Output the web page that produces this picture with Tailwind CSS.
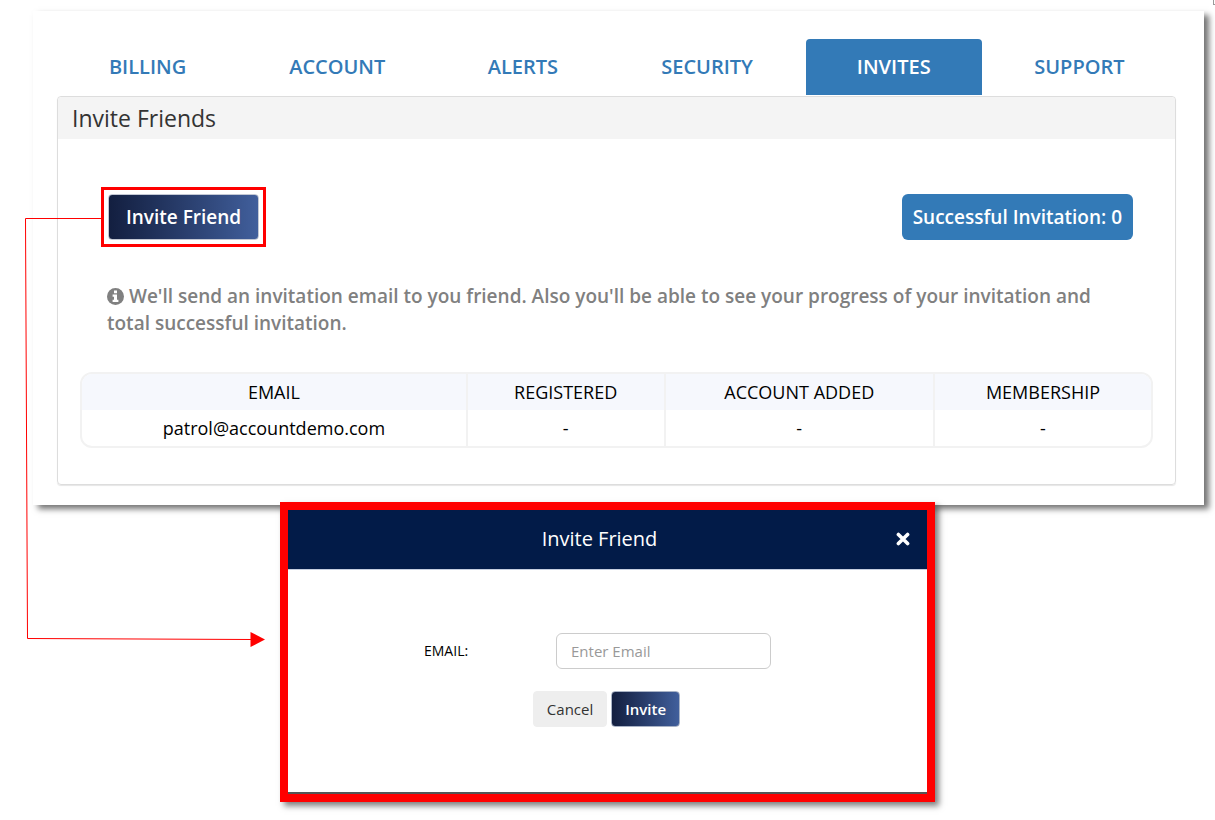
<!DOCTYPE html>
<html lang="en">
<head>

  <title>Invite Friends</title>
  <meta charset="UTF-8" />
  <meta name="viewport" content="width=device-width,initial-scale=1" />
  <script src="https://cdn.jsdelivr.net/npm/@tailwindcss/browser@4"></script>

</head>

<body class="relative bg-white pb-4 font-['Open_Sans','Noto_Sans',sans-serif] text-black">

  <!-- account settings card -->
  <main class="pt-[11px] pl-[33px] pr-[11px]">
    <div class="bg-white pt-7 pl-6 pr-7 pb-5 shadow-[5px_4px_6px_rgba(0,0,0,0.55)]">

      <nav class="-ml-1 mr-1 grid grid-cols-[189fr_190fr_181fr_187fr_186fr_185fr] text-center text-[20px] leading-7 font-semibold text-[#337ab7]">
        <a href="#billing" class="mx-[5px] py-[14px]">BILLING</a>
        <a href="#account" class="mx-[5px] py-[14px]">ACCOUNT</a>
        <a href="#alerts" class="mx-[5px] py-[14px]">ALERTS</a>
        <a href="#security" class="mx-[5px] py-[14px]">SECURITY</a>
        <a href="#invites" class="mx-[5px] py-[14px] rounded-t bg-[#337ab7] text-white">INVITES</a>
        <a href="#support" class="mx-[5px] py-[14px]">SUPPORT</a>
      </nav>

      <section class="mt-px rounded border border-[#dddddd] shadow-[0_1px_1px_rgba(0,0,0,0.1)]">
        <h1 class="rounded-t bg-[#f4f4f4] px-[14px] py-[7px] text-[23px] leading-7 font-medium text-[#333333]">Invite Friends</h1>

        <div class="pt-12 px-[22px] pb-9">
          <div class="flex items-center justify-between pl-[21px] pr-5">
            <div class="border-3 border-[#ff0000] p-1">
              <button class="rounded border border-[#c3c8d4] bg-linear-to-r from-[#131f40] to-[#415f9c] px-[17px] py-2 text-[19px] leading-7 font-semibold text-white">Invite Friend</button>
            </div>
            <span class="rounded-md bg-[#337ab7] px-[11px] py-[9px] text-[19px] leading-7 font-semibold text-white">Successful Invitation: 0</span>
          </div>

          <p class="mt-9 px-[27px] text-[19px] leading-[27px] font-semibold text-[#808080]">
            <svg class="inline size-[17px] align-[-2px]" viewBox="0 0 17 17" fill="none">
              <circle cx="8.5" cy="8.5" r="8.5" fill="#808080" />
              <path d="M7 2.6h3v2.6H7zM5.6 6.6H10v5.2h1.4v2.2H5.6v-2.2H7V8.8H5.6z" fill="#fff" />
            </svg>
            We'll send an invitation email to you friend. Also you'll be able to see your progress of your invitation and total successful invitation.
          </p>

          <div class="mt-[35px] overflow-hidden rounded-xl border-2 border-[#f2f2f2]">
            <table class="w-full table-fixed text-center text-[18px] leading-6 font-medium">
              <colgroup>
                <col class="w-[36%]">
                <col class="w-[18.5%]">
                <col class="w-[25.2%]">
                <col>
              </colgroup>
              <thead>
                <tr class="bg-[#f6f8fd]">
                  <th class="py-[6px] font-medium">EMAIL</th>
                  <th class="border-l-2 border-[#f2f2f2] py-[6px] font-medium">REGISTERED</th>
                  <th class="border-l-2 border-[#f2f2f2] py-[6px] font-medium">ACCOUNT ADDED</th>
                  <th class="border-l-2 border-[#f2f2f2] py-[6px] font-medium">MEMBERSHIP</th>
                </tr>
              </thead>
              <tbody>
                <tr>
                  <td class="py-[6px]">patrol@accountdemo.com</td>
                  <td class="border-l-2 border-[#f2f2f2] py-[6px]">-</td>
                  <td class="border-l-2 border-[#f2f2f2] py-[6px]">-</td>
                  <td class="border-l-2 border-[#f2f2f2] py-[6px]">-</td>
                </tr>
              </tbody>
            </table>
          </div>
        </div>
      </section>
    </div>
  </main>

  <!-- invite dialog, overlaps the bottom edge of the card -->
  <div role="dialog" aria-labelledby="dialogTitle" class="relative mx-auto -mt-[3px] w-[655px] border-8 border-[#ff0000] bg-white shadow-[4px_4px_6px_rgba(0,0,0,0.5)]">
    <div class="flex items-center border-b border-[#c5cee0] bg-[#021b48] px-4 pt-[15px] pb-4 text-white">
      <h2 id="dialogTitle" class="flex-1 text-center text-[20px] leading-7 font-medium">Invite Friend</h2>
      <button aria-label="Close" class="p-px">
        <svg class="size-[14px]" viewBox="0 0 14 14" fill="none" stroke="#fff" stroke-width="3.6" stroke-linecap="round">
          <path d="M2.4 2.4l9.2 9.2M11.6 2.4l-9.2 9.2" />
        </svg>
      </button>
    </div>

    <form class="border-b-2 border-[#555555] pt-[63px] pb-[65px]">
      <div class="flex items-center pl-[136px]">
        <label for="emailInput" class="w-[132px] text-[14px] leading-5">EMAIL:</label>
        <input id="emailInput" type="email" placeholder="Enter Email"
        class="w-[215px] rounded-md border border-[#cccccc] px-[14px] py-[6px] text-[15px] leading-[22px] placeholder:text-[#999999]" />
      </div>
      <div class="mt-[22px] flex justify-center gap-1 pr-[2px] text-[15px] leading-[22px]">
        <button type="button" class="rounded border border-[#eeeeee] bg-[#eeeeee] px-[13px] py-[6px] text-[#333333]">Cancel</button>
        <button type="button" class="rounded border border-[#a9b3c6] bg-linear-to-r from-[#131f40] to-[#415f9c] px-[13px] py-[6px] font-semibold text-white">Invite</button>
      </div>
    </form>
  </div>

  <!-- connector from the button to the dialog -->
  <svg class="pointer-events-none absolute top-0 left-0 h-[660px] w-[270px]" viewBox="0 0 270 660" fill="none" stroke="#ff0000">
    <path d="M104 218.5H25.5L27.5 638.5L252 639.5" />
    <path d="M250.5 632L265 639.5L250.5 647z" fill="#ff0000" stroke="none" />
  </svg>

  <span class="absolute top-0 right-0 h-[5px] w-[2px] border-b border-l border-[#999999]"></span>

</body>
</html>
